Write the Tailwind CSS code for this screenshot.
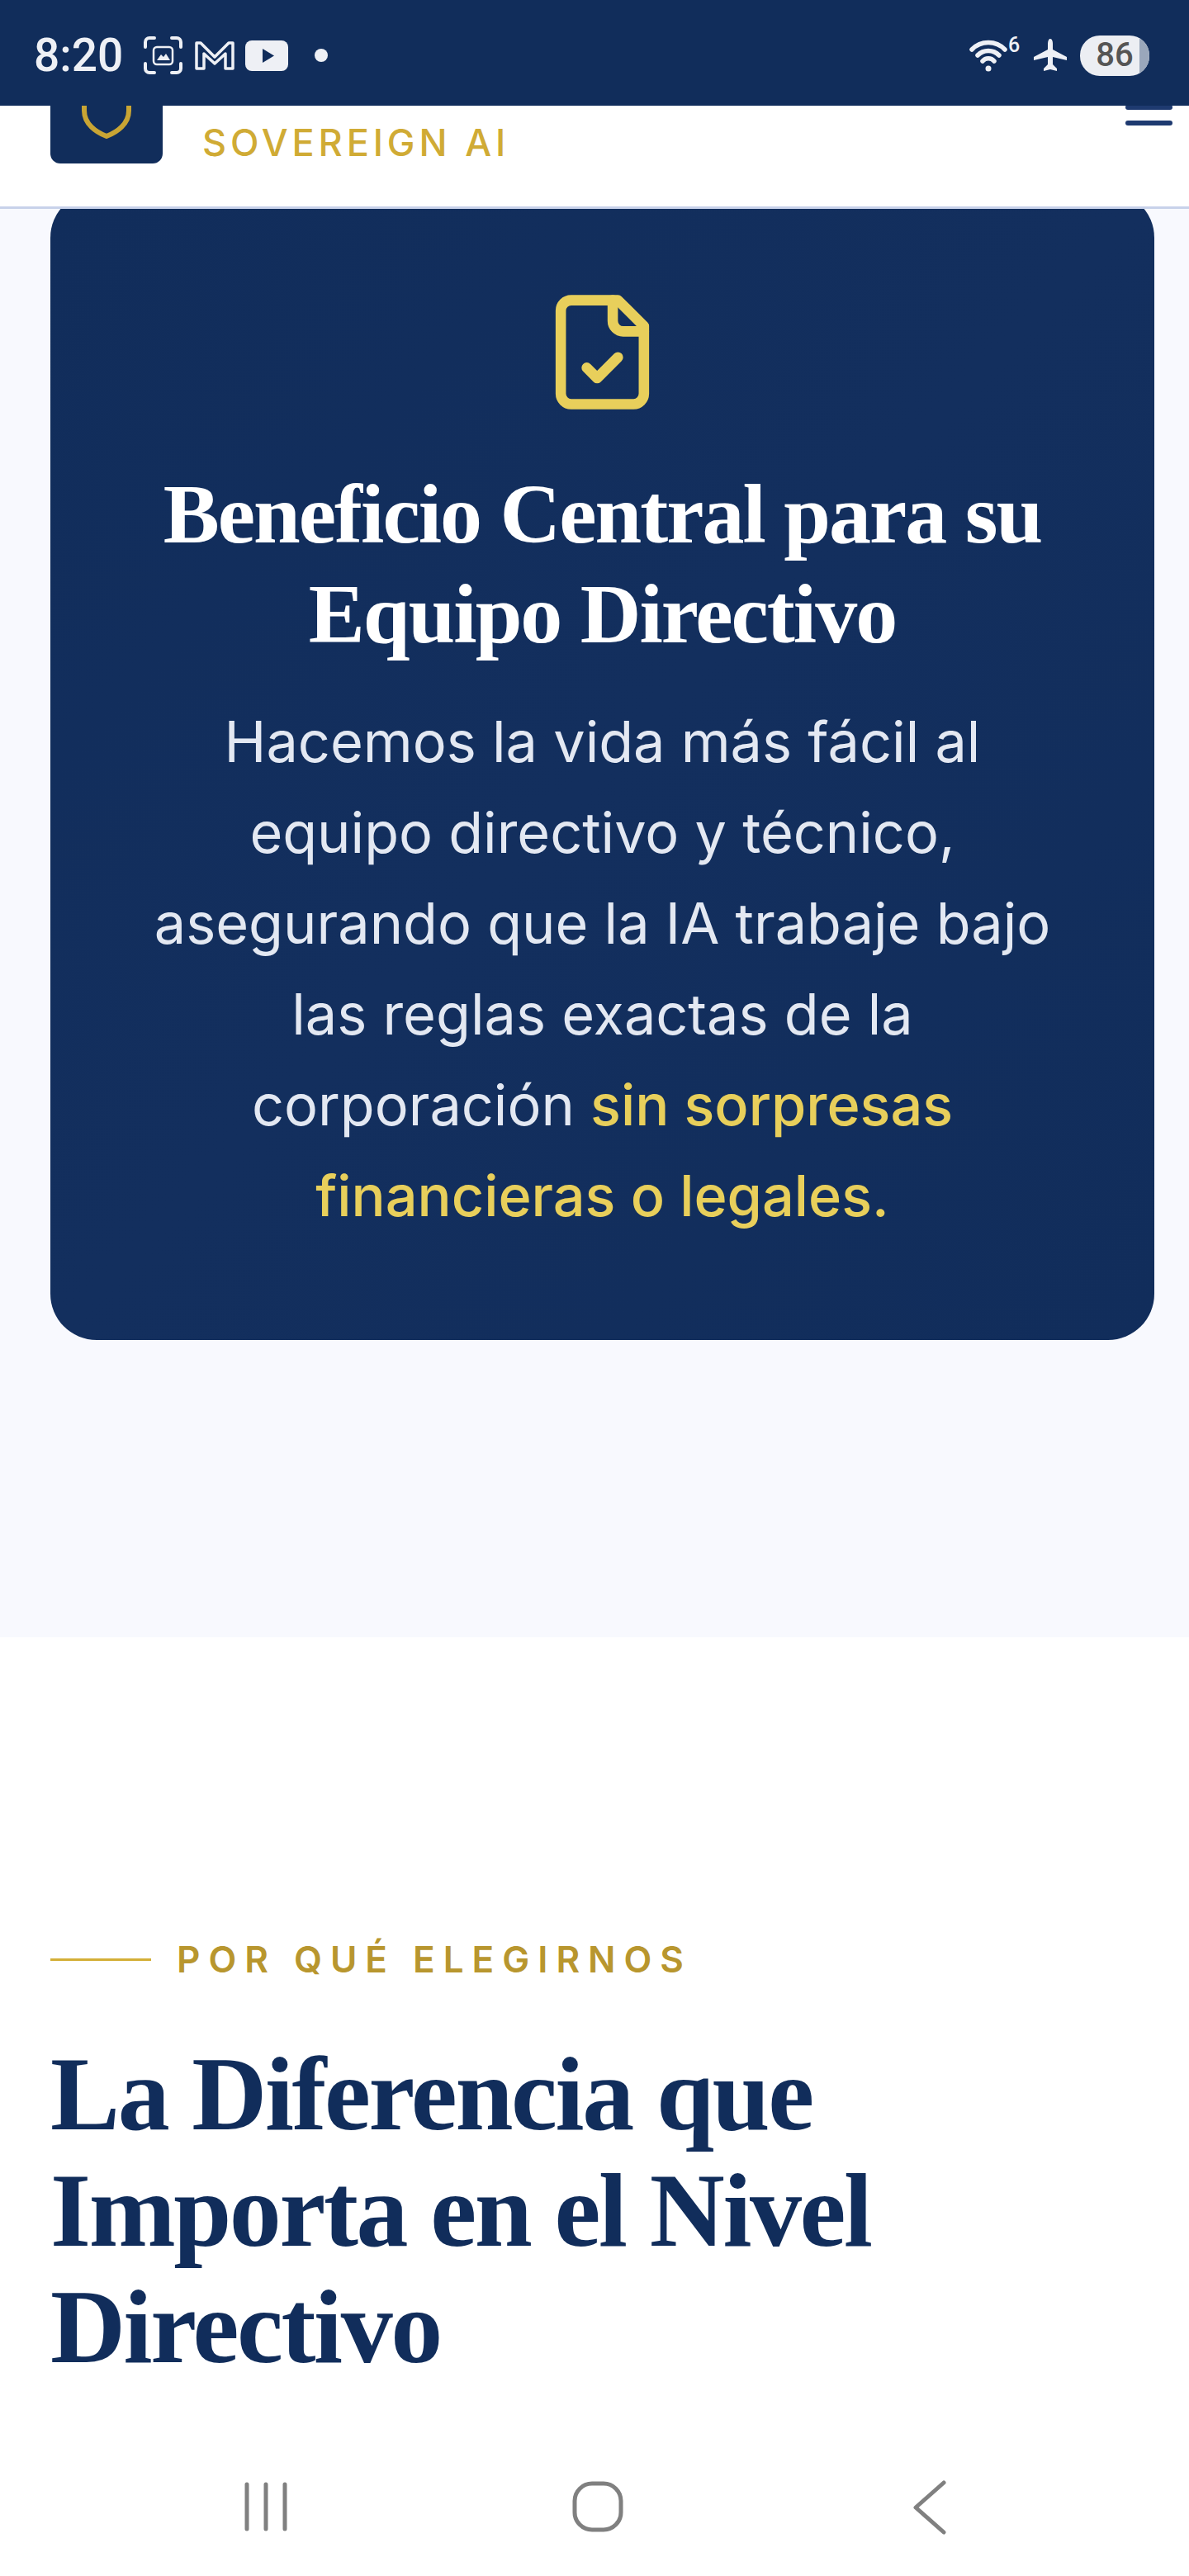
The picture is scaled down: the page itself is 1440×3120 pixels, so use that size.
<!DOCTYPE html>
<html lang="es">
<head>
<meta charset="utf-8">
<title>Sovereign AI</title>
<script src="https://cdn.jsdelivr.net/npm/@tailwindcss/browser@4"></script>
</head>
<body class="bg-white font-['Inter',sans-serif]">
<div class="w-[1440px] h-[3120px] flex flex-col overflow-hidden">

  <!-- status bar -->
  <div class="relative z-20 h-[128px] shrink-0 bg-[#112d5b] flex items-center justify-between pl-[41px] pr-[48px] text-[#eef0f5] pt-[6px]">
    <div class="flex items-center">
      <span class="font-['Roboto',sans-serif] font-medium text-[55px] leading-none w-[133px]">8:20</span>
      <svg class="w-[47px] h-[46px]" viewBox="0 0 47 46" fill="none" stroke="#eef0f5" stroke-width="4" stroke-linecap="round">
        <path d="M2 13V7a5 5 0 0 1 5-5h6M34 2h6a5 5 0 0 1 5 5v6M45 33v6a5 5 0 0 1-5 5h-6M13 44H7a5 5 0 0 1-5-5v-6"/>
        <rect x="12" y="13" width="23" height="21" rx="4" stroke-width="2.5"/>
        <path d="M16 29l5-7 3 3 3-4 5 8z" fill="#eef0f5" stroke="none"/>
      </svg>
      <svg class="w-[48px] h-[36px] ml-[15px]" viewBox="0 0 48 36" fill="none" stroke="#eef0f5" stroke-width="3.5" stroke-linejoin="round">
        <path d="M2 3h5l17 17L41 3h5v31h-9V16L24 28 11 16v18H2z"/>
      </svg>
      <svg class="w-[52px] h-[37px] ml-[13px]" viewBox="0 0 52 37">
        <rect width="52" height="37" rx="8" fill="#eef0f5"/>
        <path d="M21 10l14 8.500-14 8.500z" fill="#112d5b"/>
      </svg>
      <span class="w-[16px] h-[16px] rounded-full bg-[#eef0f5] ml-[32px]"></span>
    </div>
    <div class="flex items-center">
      <div class="relative w-[63px] h-[46px]">
        <svg class="w-[46px] h-[41px] mt-[2px]" viewBox="0 0 46 41" fill="none" stroke="#eef0f5" stroke-width="5.500" stroke-linecap="round">
          <path d="M3 14a28 28 0 0 1 40 0"/>
          <path d="M10 21a18 18 0 0 1 26 0"/>
          <path d="M16 28a9 9 0 0 1 14 0"/>
          <circle cx="23" cy="37" r="3.500" fill="#eef0f5" stroke="none"/>
        </svg>
        <span class="absolute left-[47px] top-[-2px] font-['Roboto',sans-serif] font-medium text-[25px] leading-[25px]">6</span>
      </div>
      <svg class="w-[40px] h-[40px] ml-[15px]" viewBox="0 0 40 40" fill="#eef0f5">
        <path d="M20 0c2 0 3 3 3 6v7l17 9v4l-17-4v9l5 5v3l-8-2-8 2v-3l5-5v-9L0 26v-4l17-9V6c0-3 1-6 3-6z"/>
      </svg>
      <div class="relative w-[84px] h-[49px] ml-[16px] rounded-[24px] bg-[#eceef3] overflow-hidden flex items-center justify-center">
        <span class="font-['Roboto',sans-serif] font-medium text-[#555] text-[40px] leading-none">86</span>
        <span class="absolute right-0 top-0 bottom-0 w-[12px] bg-[#9aa7bb]"></span>
      </div>
    </div>
  </div>

  <!-- site header -->
  <header class="relative z-10 h-[125px] shrink-0 bg-white border-b-[3px] border-[#c8d2ea] overflow-hidden flex items-start justify-between pl-[61px] pr-[20px]">
    <div class="flex items-start">
      <div class="w-[136px] h-[136px] -mt-[66px] rounded-[12px] bg-[#112d5b] flex justify-center">
        <svg class="w-[60px] h-[84px] mt-[22px]" viewBox="0 0 60 84" fill="none" stroke="#c9a534" stroke-width="6">
          <path d="M3 0v50c0 16 14 26 27 31 13-5 27-15 27-31V0"/>
        </svg>
      </div>
      <span class="ml-[48px] mt-[18px] text-[45px] leading-[54px] font-medium tracking-[4.9px] text-[#d0ab35]">SOVEREIGN AI</span>
    </div>
    <div class="flex flex-col gap-[13px] -mt-[1px]">
      <span class="w-[57px] h-[6px] rounded-full bg-[#1e3a70]"></span>
      <span class="w-[57px] h-[6px] rounded-full bg-[#1e3a70]"></span>
    </div>
  </header>

  <!-- benefit section -->
  <section class="h-[1730px] shrink-0 bg-[#f8f9fe] pl-[61px]">
    <div class="-mt-[21px] w-[1337px] h-[1391px] rounded-[56px] bg-gradient-to-br from-[#112d5b] via-[#132f5e] to-[#112d5b] flex flex-col items-center pt-[119px] text-center">
      <svg class="w-[151px] h-[151px]" viewBox="0 0 24 24" fill="none" stroke="#e8cf5b" stroke-width="2" stroke-linecap="round" stroke-linejoin="round">
        <path d="M15 2H6a2 2 0 0 0-2 2v16a2 2 0 0 0 2 2h12a2 2 0 0 0 2-2V7Z"/>
        <path d="M14 2v4a2 2 0 0 0 2 2h4"/>
        <path d="m9 15 2 2 4-4"/>
      </svg>
      <h3 class="mt-[60px] font-['Liberation_Serif',serif] font-bold text-white text-[102px] tracking-[-2px] leading-[121px]">Beneficio Central para su<br>Equipo Directivo</h3>
      <p class="mt-[39px] text-[68.4px] leading-[110px] font-normal text-[#e3e8f2]">Hacemos la vida más fácil al<br>equipo directivo y técnico,<br>asegurando que la IA trabaje bajo<br>las reglas exactas de la<br>corporación <span class="font-medium text-[#e8cf5b]">sin sorpresas<br>financieras o legales.</span></p>
    </div>
  </section>

  <!-- why us -->
  <section class="flex-1 bg-white px-[61px] pt-[363px]">
    <div class="flex items-center gap-[31px]">
      <span class="w-[122px] h-[3px] bg-[#d4af37]"></span>
      <span class="text-[44px] leading-[54px] font-semibold tracking-[10px] text-[#b8962e]">POR QUÉ ELEGIRNOS</span>
    </div>
    <h2 class="mt-[66px] font-['Liberation_Serif',serif] font-bold text-[#112d5b] text-[126px] tracking-[-2.4px] leading-[141px]">La Diferencia que<br>Importa en el Nivel<br>Directivo</h2>
  </section>

  <!-- nav bar -->
  <nav class="h-[160px] shrink-0 bg-white flex justify-center items-start pl-[8px] pt-[44px]">
    <div class="w-[402px] flex justify-center">
      <svg class="w-[54px] h-[64px]" viewBox="0 0 54 64" stroke="#808080" stroke-width="5" stroke-linecap="round">
        <path d="M4 5v54M27 5v54M50 5v54"/>
      </svg>
    </div>
    <div class="w-[402px] flex justify-center">
      <svg class="w-[64px] h-[64px]" viewBox="0 0 64 64" fill="none" stroke="#808080" stroke-width="5">
        <rect x="4" y="4" width="56" height="56" rx="21"/>
      </svg>
    </div>
    <div class="w-[402px] flex justify-center">
      <svg class="w-[42px] h-[66px]" viewBox="0 0 42 66" fill="none" stroke="#808080" stroke-width="5" stroke-linecap="round" stroke-linejoin="round">
        <path d="M38 3L4 33l34 30"/>
      </svg>
    </div>
  </nav>
</div>
</body>
</html>
